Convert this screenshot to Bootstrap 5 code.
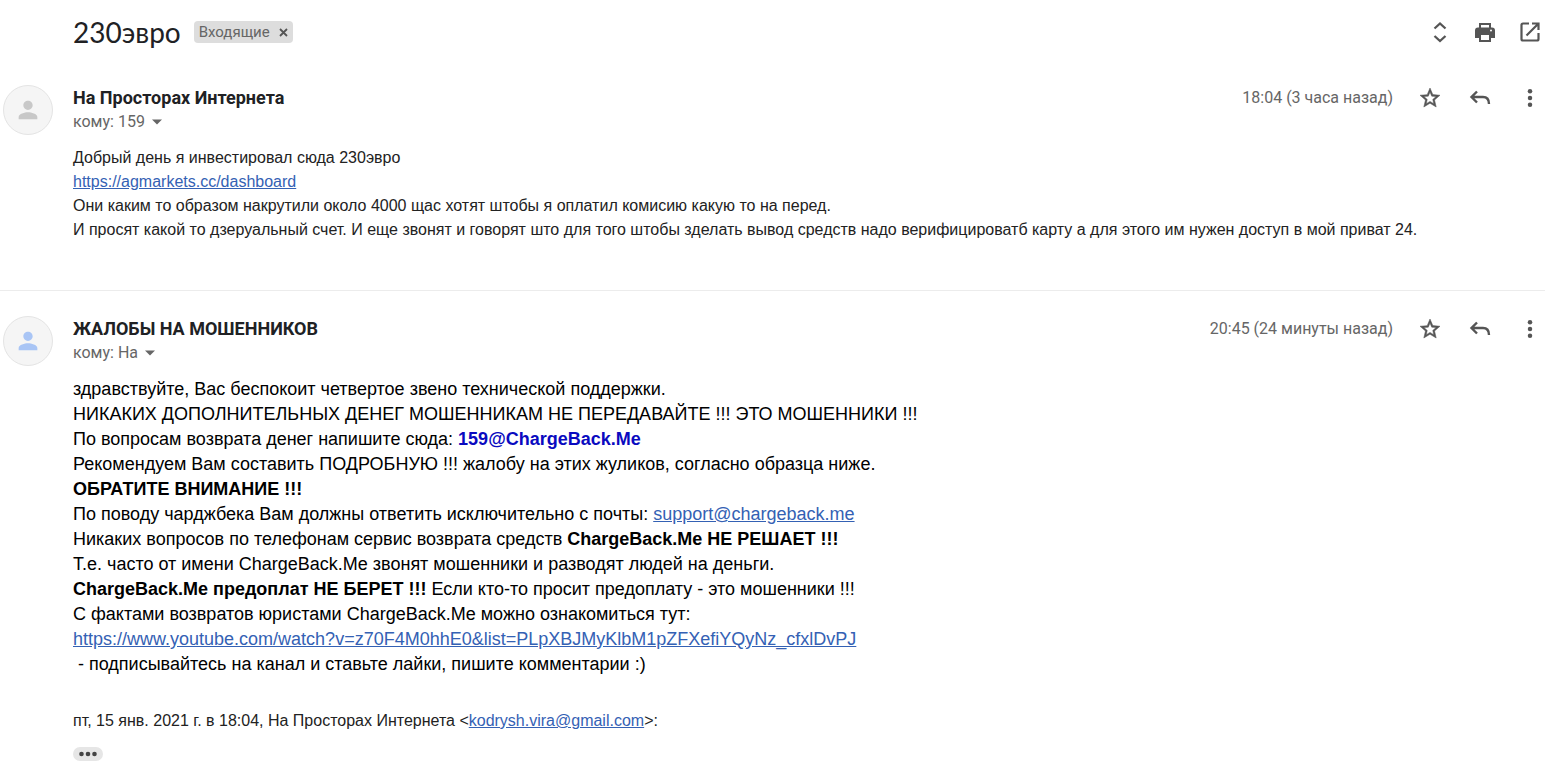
<!DOCTYPE html>
<html lang="ru">
<head>
<meta charset="utf-8">
<meta name="viewport" content="width=device-width, initial-scale=1">
<title>230эвро</title>
<link href="https://cdn.jsdelivr.net/npm/bootstrap@5.3.0/dist/css/bootstrap.min.css" rel="stylesheet">
<style>
body { font-family: "Liberation Sans", Arial, sans-serif; color: #222; background: #fff; }
.thread { padding: 4px 15px 0 3px; }
.thread-head { height: 56px; padding-left: 70px; gap: 13px; }
.subject { font: 400 28px/36px Lato, "Open Sans", sans-serif; color: #202124; }
.chip { height: 22px; padding: 0 5px; gap: 9px; border-radius: 4px; background: #ddd; color: #666; font: 400 15px/22px Roboto, sans-serif; }
.tool { width: 30px; height: 24px; color: #555; }
.tools-top { gap: 15px; }
.tools-msg { gap: 20px; }
.message { padding-top: 25px; }
.message-first { padding-bottom: 48px; }
.divider { height: 1px; margin: 0 0 0 -3px; background: #ececec; }
.message-head { min-height: 50px; margin-bottom: 11px; gap: 20px; font: 400 16px/24px Roboto, sans-serif; color: #666; }
.message-head > div:not(.avatar) { padding-top: 1px; }
.avatar { width: 50px; height: 50px; border: 1px solid #e4e4e4; background: #f5f5f5; }
.sender { font-size: 18px; line-height: 24px; font-weight: 700; color: #202124; }
.recipient { color: #666; font-size: 16px; line-height: 24px; gap: 7px; }
.sent { font-size: 16px; margin-right: 2px; }
.message-body { padding-left: 70px; font-size: 16px; line-height: 24px; }
.large-text { font-size: 18px; line-height: 25px; }
.message-body a { color: #3461b4; }
.message-body a.plain-mail { color: #0a0ac0; }
.quote { margin-top: 32px; }
.more { width: 30px; height: 14px; margin-top: 14px; border-radius: 7px; background: #e6e6e6; color: #444; }
</style>
</head>
<body>
<svg class="d-none" aria-hidden="true">
  <symbol id="star" viewBox="0 0 24 24"><path fill="currentColor" stroke="currentColor" stroke-width=".5" d="M22 9.240l-7.190-.620L12 2 9.190 8.630 2 9.240l5.460 4.730L5.820 21 12 17.270 18.180 21l-1.630-7.030L22 9.240zM12 15.400l-3.760 2.270 1-4.280-3.320-2.880 4.380-.380L12 6.100l1.710 4.040 4.380.380-3.320 2.880 1 4.280L12 15.400z"/></symbol>
  <symbol id="reply" viewBox="0 0 24 24"><path fill="none" stroke="currentColor" stroke-width="2.400" d="M9 5.500L3.500 11 9 16.500M3.500 11H15q6 0 6 7"/></symbol>
  <symbol id="dots" viewBox="0 0 24 24"><g fill="currentColor"><circle cx="12" cy="4" r="2.700"/><circle cx="12" cy="12" r="2.700"/><circle cx="12" cy="20" r="2.700"/></g></symbol>
  <symbol id="person" viewBox="0 0 24 24"><path fill="currentColor" d="M12 12c2.210 0 4-1.790 4-4s-1.790-4-4-4-4 1.790-4 4 1.790 4 4 4zm0 2c-2.670 0-8 1.340-8 4v2h16v-2c0-2.660-5.330-4-8-4z"/></symbol>
  <symbol id="caret" viewBox="0 0 10 6"><path fill="currentColor" d="M0 .5h10L5 5.500z"/></symbol>
</svg>
<main class="thread">
  <header class="thread-head d-flex align-items-center">
    <h1 class="subject m-0">230эвро</h1>
    <span class="chip d-inline-flex align-items-center">Входящие
      <button type="button" class="btn p-0 border-0 d-flex" aria-label="Удалить ярлык"><svg width="9" height="9" viewBox="0 0 9 9"><path d="M1 1l7 7M8 1L1 8" stroke="#555" stroke-width="1.800"/></svg></button>
    </span>
    <div class="tools-top d-flex ms-auto">
      <button type="button" class="tool btn p-0 border-0 d-flex align-items-center justify-content-center" aria-label="Развернуть все"><svg width="24" height="24" viewBox="0 0 24 24"><path fill="none" stroke="currentColor" stroke-width="2.300" d="M6.500 8.500L12 3.500l5.500 5M6.500 16l5.500 5 5.500-5"/></svg></button>
      <button type="button" class="tool btn p-0 border-0 d-flex align-items-center justify-content-center" aria-label="Печать"><svg width="24" height="24" viewBox="0 0 24 24"><path fill="currentColor" fill-rule="evenodd" d="M6 3h12v4.500h1a3 3 0 0 1 3 3V18h-4v4H6v-4H2v-7.500a3 3 0 0 1 3-3h1zM8 5v2.500h8V5zM8 15v5h8v-5zM18 9.500a1 1 0 1 0 0 2 1 1 0 0 0 0-2z"/></svg></button>
      <button type="button" class="tool btn p-0 border-0 d-flex align-items-center justify-content-center" aria-label="В новом окне"><svg width="24" height="24" viewBox="0 0 24 24"><path fill="none" stroke="currentColor" stroke-width="2.200" d="M11 3.500H5Q3.500 3.500 3.500 5v14q0 1.500 1.500 1.500h14q1.500 0 1.500-1.500v-6M14 3.500h6.500V10M20 4L8.500 15.500"/></svg></button>
    </div>
  </header>

  <article class="message message-first">
    <div class="message-head d-flex">
      <div class="avatar rounded-circle d-flex align-items-center justify-content-center flex-shrink-0" style="color:#c8c8c8"><svg width="28" height="28"><use href="#person"/></svg></div>
      <div>
        <h2 class="sender m-0">На Просторах Интернета</h2>
        <button type="button" class="recipient btn p-0 border-0 d-flex align-items-center">кому: 159 <svg width="10" height="6"><use href="#caret"/></svg></button>
      </div>
      <div class="tools-msg d-flex align-items-start ms-auto">
        <time class="sent">18:04 (3 часа назад)</time>
        <button type="button" class="tool btn p-0 border-0 d-flex align-items-center justify-content-center" aria-label="Пометить"><svg width="24" height="24"><use href="#star"/></svg></button>
        <button type="button" class="tool btn p-0 border-0 d-flex align-items-center justify-content-center" aria-label="Ответить"><svg width="24" height="24"><use href="#reply"/></svg></button>
        <button type="button" class="tool btn p-0 border-0 d-flex align-items-center justify-content-center" aria-label="Ещё"><svg width="20" height="20"><use href="#dots"/></svg></button>
      </div>
    </div>
    <div class="message-body">
      <div>Добрый день я инвестировал сюда 230эвро</div>
      <div><a href="#">https://agmarkets.cc/dashboard</a></div>
      <div>Они каким то образом накрутили около 4000 щас хотят штобы я оплатил комисию какую то на перед.</div>
      <div>И просят какой то дзеруальный счет. И еще звонят и говорят што для того штобы зделать вывод средств надо верифицироватб карту а для этого им нужен доступ в мой приват 24.</div>
    </div>
  </article>
  <div class="divider"></div>
  <article class="message">
    <div class="message-head d-flex">
      <div class="avatar rounded-circle d-flex align-items-center justify-content-center flex-shrink-0" style="color:#a9c5f5"><svg width="28" height="28"><use href="#person"/></svg></div>
      <div>
        <h2 class="sender m-0">ЖАЛОБЫ НА МОШЕННИКОВ</h2>
        <button type="button" class="recipient btn p-0 border-0 d-flex align-items-center">кому: На <svg width="10" height="6"><use href="#caret"/></svg></button>
      </div>
      <div class="tools-msg d-flex align-items-start ms-auto">
        <time class="sent">20:45 (24 минуты назад)</time>
        <button type="button" class="tool btn p-0 border-0 d-flex align-items-center justify-content-center" aria-label="Пометить"><svg width="24" height="24"><use href="#star"/></svg></button>
        <button type="button" class="tool btn p-0 border-0 d-flex align-items-center justify-content-center" aria-label="Ответить"><svg width="24" height="24"><use href="#reply"/></svg></button>
        <button type="button" class="tool btn p-0 border-0 d-flex align-items-center justify-content-center" aria-label="Ещё"><svg width="20" height="20"><use href="#dots"/></svg></button>
      </div>
    </div>
    <div class="message-body">
      <div class="large-text text-black">
        <div>здравствуйте, Вас беспокоит четвертое звено технической поддержки.</div>
        <div>НИКАКИХ ДОПОЛНИТЕЛЬНЫХ ДЕНЕГ МОШЕННИКАМ НЕ ПЕРЕДАВАЙТЕ !!! ЭТО МОШЕННИКИ !!!</div>
        <div>По вопросам возврата денег напишите сюда: <a href="#" class="plain-mail fw-bold text-decoration-none">159@ChargeBack.Me</a></div>
        <div>Рекомендуем Вам составить ПОДРОБНУЮ !!! жалобу на этих жуликов, согласно образца ниже.</div>
        <div class="fw-bold">ОБРАТИТЕ ВНИМАНИЕ !!!</div>
        <div>По поводу чарджбека Вам должны ответить исключительно с почты: <a href="#">support@chargeback.me</a></div>
        <div>Никаких вопросов по телефонам сервис возврата средств <b>ChargeBack.Me НЕ РЕШАЕТ !!!</b></div>
        <div>Т.е. часто от имени ChargeBack.Me звонят мошенники и разводят людей на деньги.</div>
        <div><b>ChargeBack.Me предоплат НЕ БЕРЕТ !!!</b> Если кто-то просит предоплату - это мошенники !!!</div>
        <div>С фактами возвратов юристами ChargeBack.Me можно ознакомиться тут:</div>
        <div><a href="#">https://www.youtube.com/watch?v=z70F4M0hhE0&amp;list=PLpXBJMyKlbM1pZFXefiYQyNz_cfxlDvPJ</a></div>
        <div>&nbsp;- подписывайтесь на канал и ставьте лайки, пишите комментарии :)</div>
      </div>
      <div class="quote">пт, 15 янв. 2021 г. в 18:04, На Просторах Интернета &lt;<a href="#">kodrysh.vira@gmail.com</a>&gt;:</div>
      <button type="button" class="more btn p-0 border-0 d-flex align-items-center justify-content-center" aria-label="Показать сокращённый текст"><svg width="18" height="6" viewBox="0 0 18 6"><g fill="currentColor"><circle cx="2.500" cy="3" r="2.300"/><circle cx="9" cy="3" r="2.300"/><circle cx="15.500" cy="3" r="2.300"/></g></svg></button>
    </div>
  </article>
</main>
<script src="https://cdn.jsdelivr.net/npm/bootstrap@5.3.0/dist/js/bootstrap.bundle.min.js"></script>
</body>
</html>
